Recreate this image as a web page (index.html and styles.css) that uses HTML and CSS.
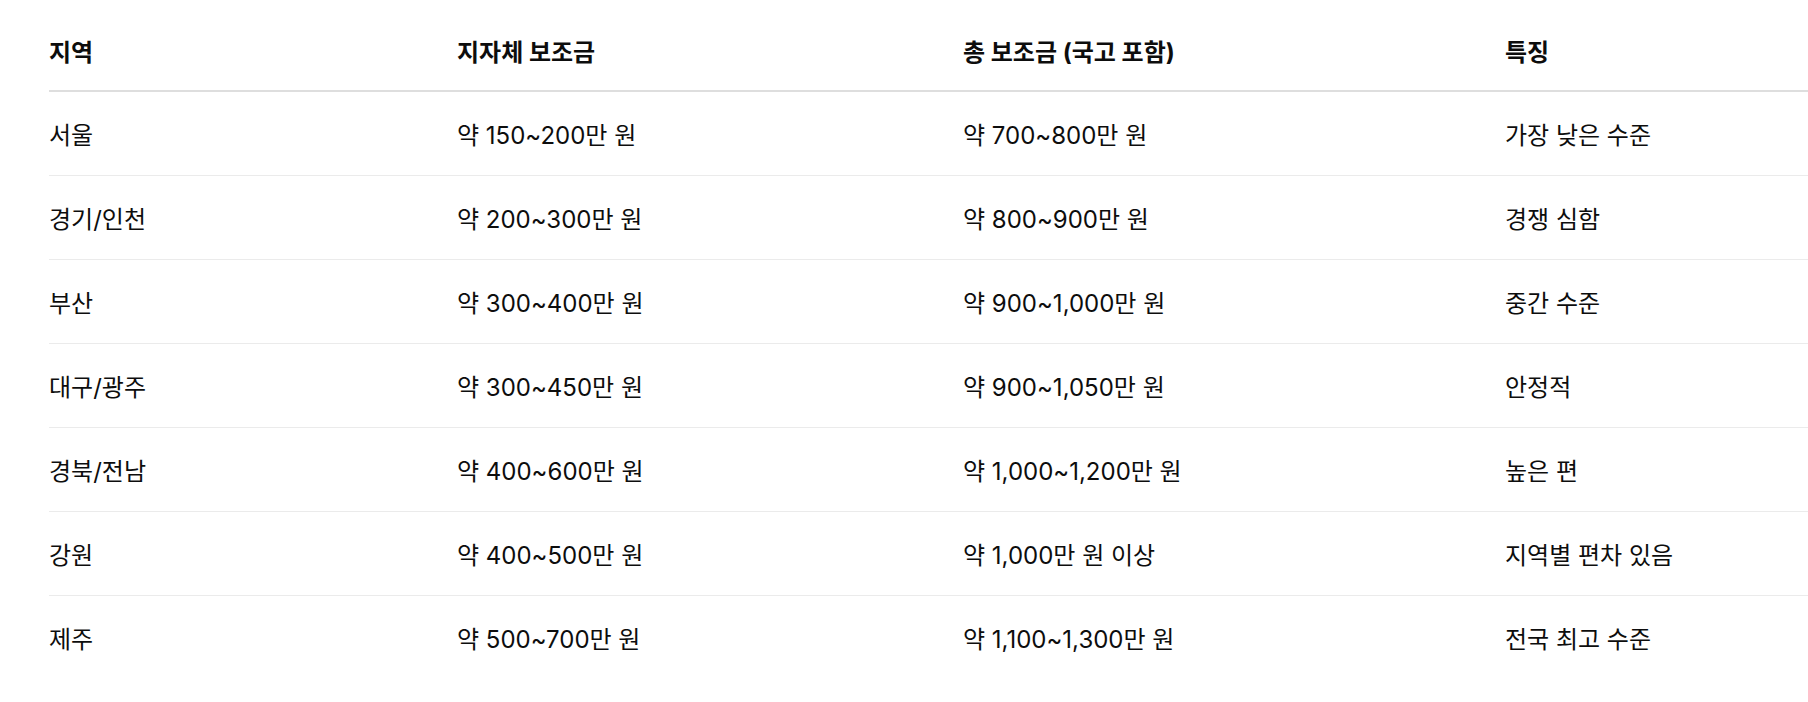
FILE: index.html
```html
<!DOCTYPE html>
<html lang="ko">
<head>
<meta charset="utf-8">
<link rel="stylesheet" href="styles.css">
</head>
<body>
<table class="subsidy">
  <colgroup>
    <col class="c1"><col class="c2"><col class="c3"><col class="c4">
  </colgroup>
  <thead>
    <tr><th>지역</th><th>지자체 보조금</th><th>총 보조금 (국고 포함)</th><th>특징</th></tr>
  </thead>
  <tbody>
    <tr><td>서울</td><td>약 150~200만 원</td><td>약 700~800만 원</td><td>가장 낮은 수준</td></tr>
    <tr><td>경기/인천</td><td>약 200~300만 원</td><td>약 800~900만 원</td><td>경쟁 심함</td></tr>
    <tr><td>부산</td><td>약 300~400만 원</td><td>약 900~1,000만 원</td><td>중간 수준</td></tr>
    <tr><td>대구/광주</td><td>약 300~450만 원</td><td>약 900~1,050만 원</td><td>안정적</td></tr>
    <tr><td>경북/전남</td><td>약 400~600만 원</td><td>약 1,000~1,200만 원</td><td>높은 편</td></tr>
    <tr><td>강원</td><td>약 400~500만 원</td><td>약 1,000만 원 이상</td><td>지역별 편차 있음</td></tr>
    <tr><td>제주</td><td>약 500~700만 원</td><td>약 1,100~1,300만 원</td><td>전국 최고 수준</td></tr>
  </tbody>
</table>
</body>
</html>
```
FILE: styles.css
```css
html, body {
  margin: 0;
  padding: 0;
  background: #ffffff;
}
body {
  font-family: Inter, "Noto Sans CJK KR", sans-serif;
  color: #0d0d0d;
  overflow: hidden;
}
.subsidy {
  border-collapse: collapse;
  table-layout: fixed;
  width: 1760px;
  margin: 10px 0 0 49px;
  font-size: 24px;
}
.c1 { width: 408px; }
.c2 { width: 506px; }
.c3 { width: 542px; }
.c4 { width: 304px; }
.subsidy th {
  text-align: left;
  font-weight: 700;
  height: 80px;
  padding: 0;
  vertical-align: middle;
  border-bottom: 2px solid #dedede;
  white-space: nowrap;
}
.subsidy td {
  height: 83px;
  padding: 0;
  vertical-align: middle;
  border-bottom: 1px solid #ebebeb;
  white-space: nowrap;
  font-weight: 400;
}
.subsidy tbody tr:last-child td {
  border-bottom: none;
}
```
